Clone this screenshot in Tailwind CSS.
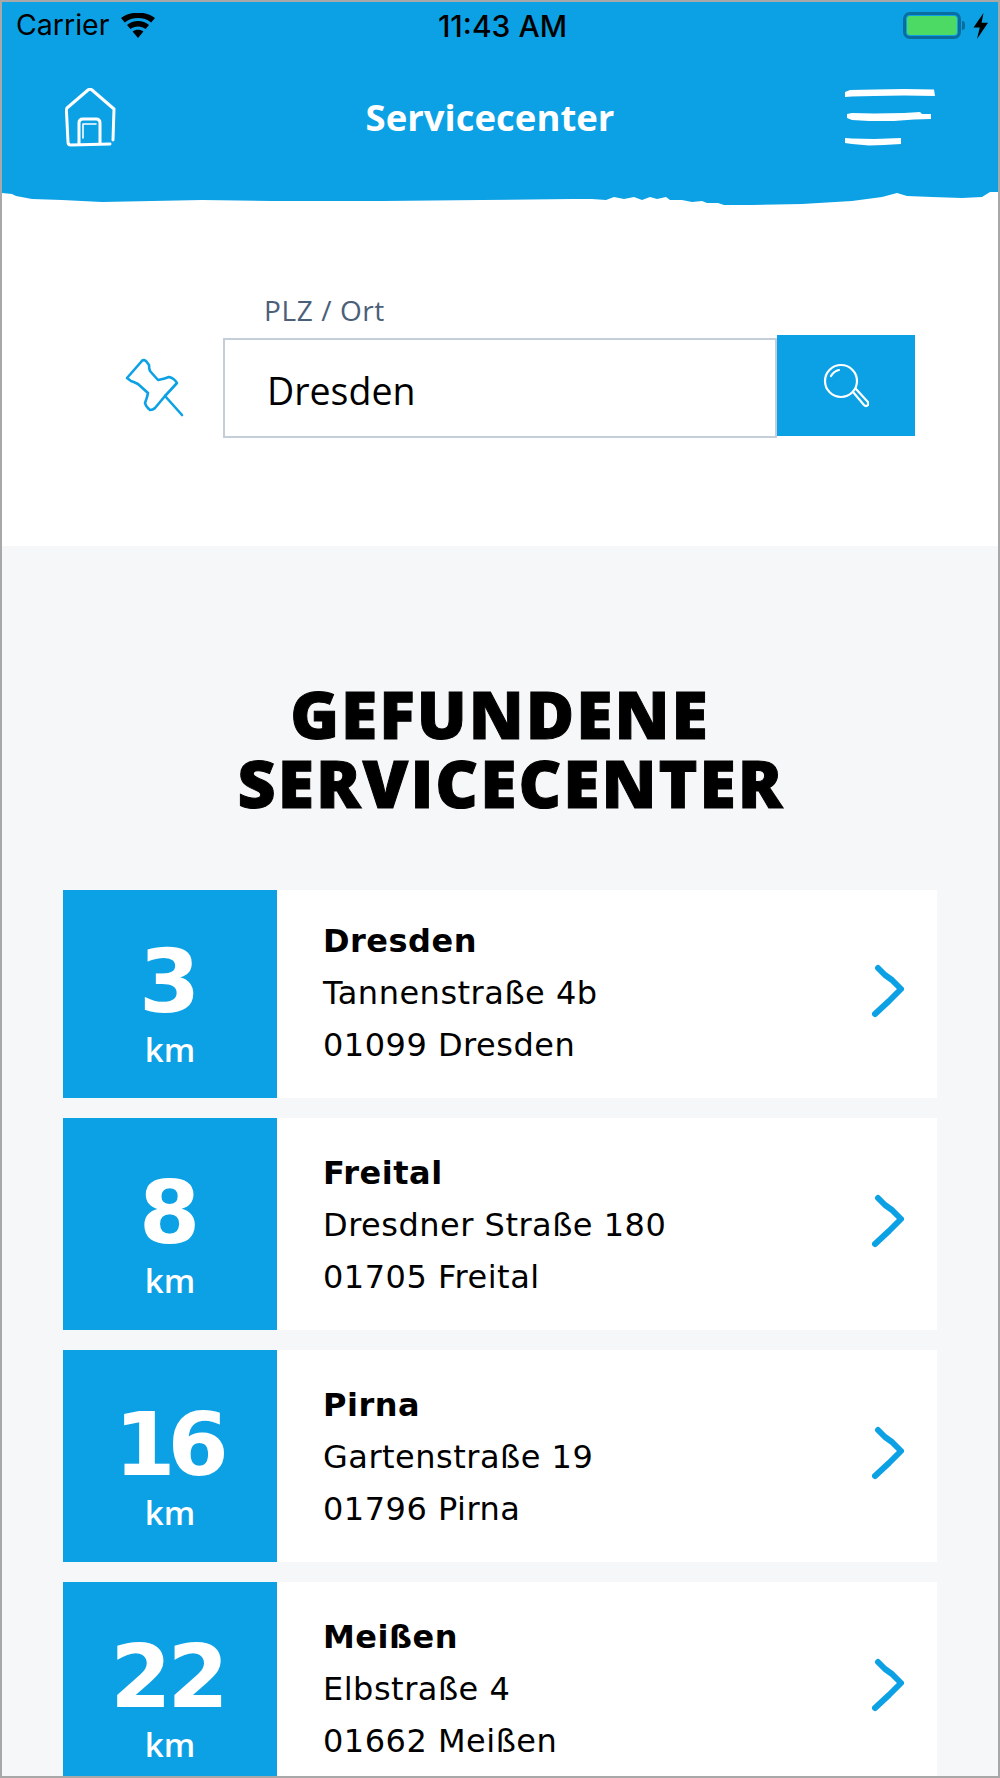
<!DOCTYPE html>
<html lang="de">
<head>
    <meta charset="UTF-8">
    <meta name="viewport" content="width=device-width, initial-scale=1.0">
    <title>Servicecenter</title>
    <script src="https://cdn.jsdelivr.net/npm/@tailwindcss/browser@4"></script>
</head>
<body class="bg-white">
<div class="w-[1000px] h-[1778px] overflow-hidden border-x-2 border-t-2 border-b-2 border-[#a8a8a8] bg-[#f6f7f9] flex flex-col font-['Open_Sans',sans-serif]">

    <!-- Header -->
    <header class="bg-[#0ca1e5] h-[188px] shrink-0 flex flex-col">
        <div class="h-[47px] pl-[14px] pr-[9px] flex items-center justify-between font-['Inter',sans-serif] text-black">
            <div class="w-[330px] flex items-center gap-[11px]">
                <span class="text-[28.5px] leading-none">Carrier</span>
                <svg class="w-[36px] h-[26px]" viewBox="0 0 36 26" fill="black">
                    <path d="M18 25 L12.6 18.6 C15.5 16.2 20.5 16.2 23.4 18.6 Z"/>
                    <path d="M10.4 16 L7 12 C13 6.8 23 6.8 29 12 L25.6 16 C21.5 12.6 14.5 12.6 10.4 16 Z"/>
                    <path d="M4.8 9.4 L1 5 C10 -2.2 26 -2.2 35 5 L31.2 9.4 C24 3.6 12 3.6 4.8 9.4 Z"/>
                </svg>
            </div>
            <span class="text-[30px] leading-none font-medium">11:43 AM</span>
            <div class="w-[330px] flex items-center justify-end gap-[8px]">
                <div class="flex items-center gap-[1px]">
                    <div class="w-[58px] h-[27px] rounded-[7px] border-[3px] border-[#0a6d9f] p-[1px]">
                        <div class="w-full h-full rounded-[3px] bg-[#4cd964]"></div>
                    </div>
                    <div class="w-[3px] h-[9px] rounded-r-full bg-[#0a6d9f]"></div>
                </div>
                <svg class="w-[16px] h-[26px]" viewBox="0 0 16 26" fill="black"><path d="M10.5 0 L0.5 14.5 L6.8 14.5 L4 26 L15 9.8 L8.6 9.8 Z"/></svg>
            </div>
        </div>
        <div class="relative h-[90px] mt-[24px] flex items-center justify-between pl-[63px] pr-[62px]">
            <svg class="w-[52px] h-[60px]" viewBox="0 0 52 60" fill="none" stroke="white" stroke-width="3" stroke-linecap="round" stroke-linejoin="round">
                <path d="M48 52 L49 21 L27 2 Q25 0.5 23 2 L2 20 Q1 22 1.5 24 L3 54 Q3 57 6 57 L45 56"/>
                <path d="M14 56 L14 35 Q14 31 18 31 L31 31 Q35 31 35 35 L35 55"/>
                <path d="M18 50 L18 36 L31 36" stroke-width="1.6"/>
            </svg>
            <h1 class="absolute left-0 right-[20px] text-center text-white text-[36.5px] font-bold leading-none -translate-y-[1px] font-['Open_Sans',sans-serif]">Servicecenter</h1>
            <svg class="w-[92px] h-[60px]" viewBox="0 0 92 60" fill="white">
                <path d="M1 4 L6 2 L30 1.5 L60 1 L90 1.5 L91 8 L60 7.5 L30 8 L8 8.5 L1 9 Z"/>
                <path d="M3 26 L8 25 L30 25.5 L60 25 L76 24 L78 26 L87 26 L87 31 L70 31.5 L50 33 L25 33 L8 32 L3 30 Z"/>
                <path d="M1 50 L8 50.5 L30 51 L57 50 L57 56 L40 57 L25 57.5 L8 56 L1 55 Z"/>
            </svg>
        </div>
    </header>
    <svg class="block w-[996px] h-[18px] shrink-0 bg-white" viewBox="0 0 996 18" preserveAspectRatio="none" fill="#0ca1e5">
        <path d="M0 0 L996 0 L996 2 L988 2 L980 7 L960 8 L930 7 L905 6 L895 3 L880 7 L850 11 L800 14 L750 15 L722 15 L716 13 L705 13 L700 11 L690 12 L680 10 L668 10 L664 7 L655 9 L648 7 L640 10 L632 7 L622 9 L612 7 L604 10 L590 9 L570 9 L480 10 L380 11 L270 11 L200 10 L100 12 L60 10 L30 9 L14 6 L10 4 L0 3 Z"/>
    </svg>

    <!-- Search -->
    <section class="bg-white h-[338px] shrink-0 pt-[88px] pl-[123px] flex items-start gap-0">
        <svg class="w-[60px] h-[62px] mt-[61px] mr-[38px]" viewBox="0 0 60 62" fill="none" stroke="#0ca1e5" stroke-width="2.6" stroke-linecap="round" stroke-linejoin="round">
            <path d="M2 21 L16 5 Q18 2 21 4 L24 8 Q24 12 25 14 L33 23 Q39 22 44 20 Q49 21 52 26 L40 39 L30 51 Q28 53 25 53 Q21 50 20 46 Q22 41 23 36 L13 27 Q9 25 6 24 Z"/>
            <path d="M40 39 L57 58"/>
        </svg>
        <div class="flex flex-col">
            <label class="h-[42px] pl-[41px] text-[28px] leading-[28px] text-[#4a6078] tracking-[0.6px]">PLZ / Ort</label>
            <div class="flex items-start">
                <div class="w-[554px] h-[100px] border-2 border-[#c5cdd9] bg-white flex items-center pl-[42px] pt-[6px] text-[37.5px] text-black">Dresden</div>
                <div class="w-[138px] h-[101px] -mt-[3px] bg-[#0ca1e5] flex items-center justify-center">
                    <svg class="w-[46px] h-[46px]" viewBox="0 0 46 46" fill="none" stroke="white" stroke-width="2.2" stroke-linecap="round">
                        <circle cx="18" cy="18" r="16"/>
                        <path d="M8 13 Q11 8 16 7"/>
                        <path d="M30 29 L41 42 Q43 44 45 42 Q46 40 44 38 L33 26"/>
                    </svg>
                </div>
            </div>
        </div>
    </section>

    <!-- Results -->
    <section class="flex-1 pt-[133px] px-[61px]">
        <h2 class="text-center text-black text-[66px] leading-[69px] font-extrabold tracking-[2px] [-webkit-text-stroke:1px_black] font-['Open_Sans',sans-serif]">
            <span class="block">GEFUNDENE</span>
            <span class="block pl-[22px]">SERVICECENTER</span>
        </h2>

        <div class="mt-[73px] flex flex-col gap-[20px]">
            <!-- card 1 -->
            <div class="h-[208px] flex bg-white">
                <div class="w-[214px] bg-[#0ca1e5] text-white flex flex-col items-center pt-[57px]">
                    <span class="h-[70px] pr-[5px] text-[88px] leading-[70px] font-bold tracking-[-4px] font-['DejaVu_Sans',sans-serif]">3</span>
                    <span class="mt-[13px] text-[33px] leading-[40px] font-semibold">km</span>
                </div>
                <div class="flex-1 pl-[46px] pt-[25px] text-black font-['DejaVu_Sans',sans-serif] text-[32px] leading-[52px] tracking-[0.5px]">
                    <div class="font-bold">Dresden</div>
                    <div>Tannenstraße 4b</div>
                    <div>01099 Dresden</div>
                </div>
                <div class="w-[67px] flex items-center">
                    <svg class="w-[34px] h-[56px] -mt-[4px]" viewBox="0 0 34 56" fill="none" stroke="#0ca1e5" stroke-width="6" stroke-linecap="round" stroke-linejoin="round"><path d="M8 4 L15 11 L22 16 L31 25 L19 37 L5 50"/></svg>
                </div>
            </div>
            <!-- card 2 -->
            <div class="h-[212px] flex bg-white">
                <div class="w-[214px] bg-[#0ca1e5] text-white flex flex-col items-center pt-[60px]">
                    <span class="h-[70px] pr-[5px] text-[88px] leading-[70px] font-bold tracking-[-4px] font-['DejaVu_Sans',sans-serif]">8</span>
                    <span class="mt-[13px] text-[33px] leading-[40px] font-semibold">km</span>
                </div>
                <div class="flex-1 pl-[46px] pt-[29px] text-black font-['DejaVu_Sans',sans-serif] text-[32px] leading-[52px] tracking-[0.5px]">
                    <div class="font-bold">Freital</div>
                    <div>Dresdner Straße 180</div>
                    <div>01705 Freital</div>
                </div>
                <div class="w-[67px] flex items-center">
                    <svg class="w-[34px] h-[56px] -mt-[4px]" viewBox="0 0 34 56" fill="none" stroke="#0ca1e5" stroke-width="6" stroke-linecap="round" stroke-linejoin="round"><path d="M8 4 L15 11 L22 16 L31 25 L19 37 L5 50"/></svg>
                </div>
            </div>
            <!-- card 3 -->
            <div class="h-[212px] flex bg-white">
                <div class="w-[214px] bg-[#0ca1e5] text-white flex flex-col items-center pt-[60px]">
                    <span class="h-[70px] pr-[5px] text-[88px] leading-[70px] font-bold tracking-[-8px] font-['DejaVu_Sans',sans-serif]">16</span>
                    <span class="mt-[13px] text-[33px] leading-[40px] font-semibold">km</span>
                </div>
                <div class="flex-1 pl-[46px] pt-[29px] text-black font-['DejaVu_Sans',sans-serif] text-[32px] leading-[52px] tracking-[0.5px]">
                    <div class="font-bold">Pirna</div>
                    <div>Gartenstraße 19</div>
                    <div>01796 Pirna</div>
                </div>
                <div class="w-[67px] flex items-center">
                    <svg class="w-[34px] h-[56px] -mt-[4px]" viewBox="0 0 34 56" fill="none" stroke="#0ca1e5" stroke-width="6" stroke-linecap="round" stroke-linejoin="round"><path d="M8 4 L15 11 L22 16 L31 25 L19 37 L5 50"/></svg>
                </div>
            </div>
            <!-- card 4 -->
            <div class="h-[212px] flex bg-white">
                <div class="w-[214px] bg-[#0ca1e5] text-white flex flex-col items-center pt-[60px]">
                    <span class="h-[70px] pr-[5px] text-[88px] leading-[70px] font-bold tracking-[-4px] font-['DejaVu_Sans',sans-serif]">22</span>
                    <span class="mt-[13px] text-[33px] leading-[40px] font-semibold">km</span>
                </div>
                <div class="flex-1 pl-[46px] pt-[29px] text-black font-['DejaVu_Sans',sans-serif] text-[32px] leading-[52px] tracking-[0.5px]">
                    <div class="font-bold">Meißen</div>
                    <div>Elbstraße 4</div>
                    <div>01662 Meißen</div>
                </div>
                <div class="w-[67px] flex items-center">
                    <svg class="w-[34px] h-[56px] -mt-[4px]" viewBox="0 0 34 56" fill="none" stroke="#0ca1e5" stroke-width="6" stroke-linecap="round" stroke-linejoin="round"><path d="M8 4 L15 11 L22 16 L31 25 L19 37 L5 50"/></svg>
                </div>
            </div>
        </div>
    </section>
</div>
</body>
</html>
